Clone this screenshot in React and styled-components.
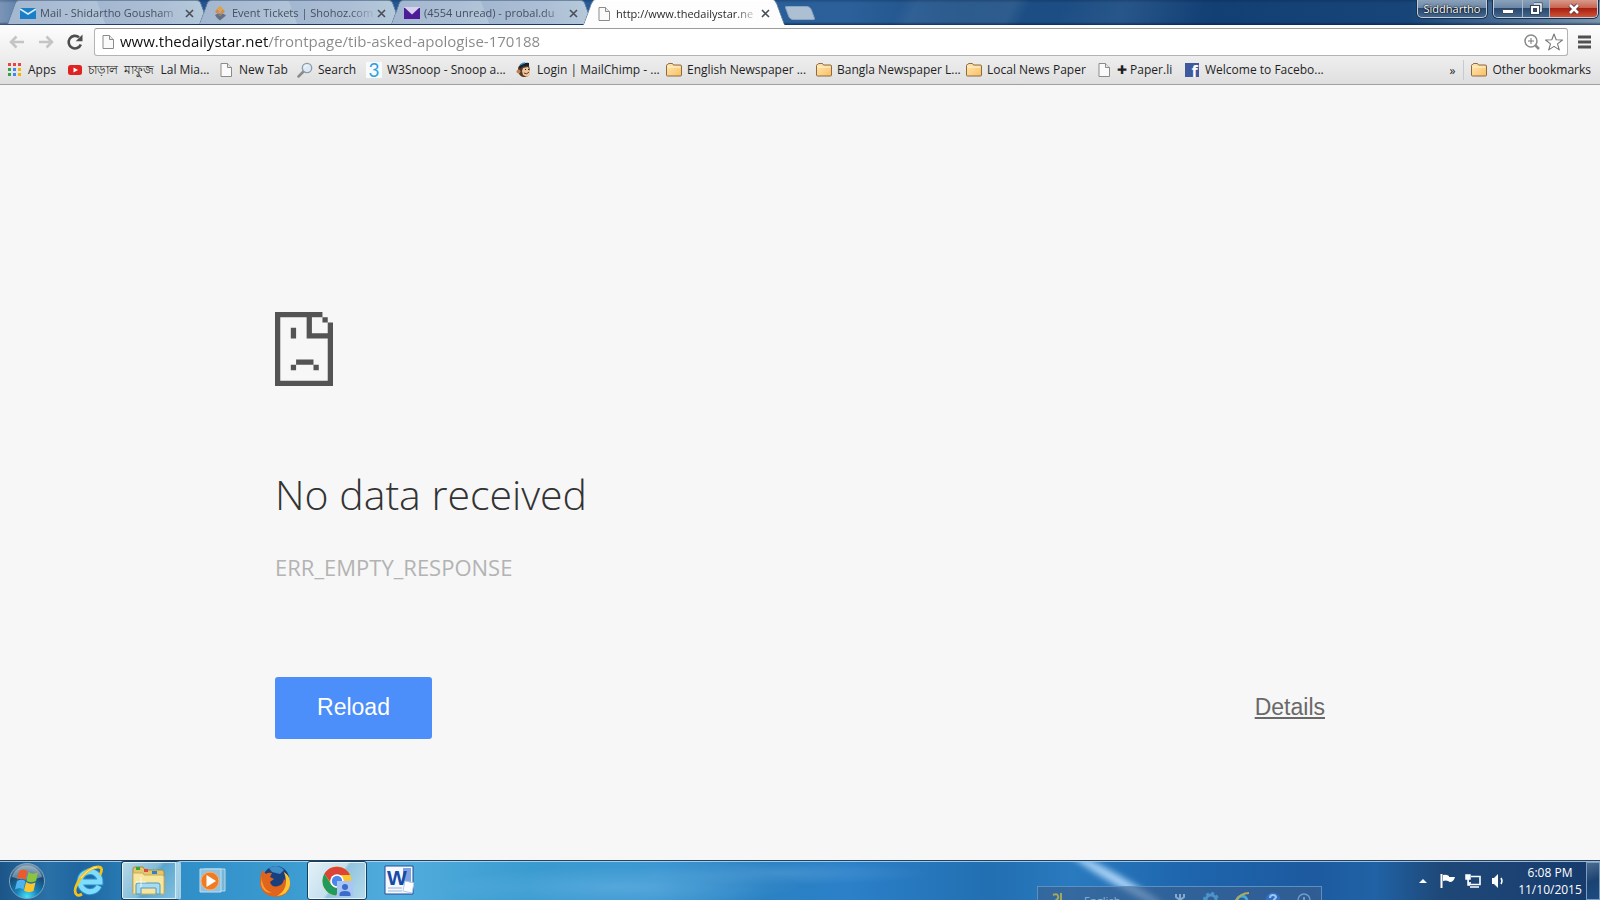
import React from "react";
import styled, { createGlobalStyle, css } from "styled-components";

const ui = `"Open Sans", "Noto Sans", sans-serif`;

const Global = createGlobalStyle`
  * { box-sizing: border-box; }
  body { margin: 0; background: #f7f7f7; font-family: ${ui}; }
  button { padding: 0; border: 0; background: none; font: inherit; color: inherit; }
  a { color: inherit; text-decoration: none; }
  svg { display: block; flex: none; }
`;

const Screen = styled.div`
  display: flex;
  flex-direction: column;
  min-height: 100vh;
`;

/* ---------- title bar ---------- */
const TitleBar = styled.header`
  display: flex;
  height: 25px;
  padding-left: 7px;
  padding-right: 2px;
  background:
    linear-gradient(to bottom, rgba(0, 20, 50, 0.25) 0, transparent 3px, transparent 22px, rgba(0, 25, 60, 0.6) 25px),
    linear-gradient(115deg, transparent 56%, rgba(255, 255, 255, 0.06) 57%, rgba(255, 255, 255, 0.08) 63%, transparent 64%, transparent 66%, rgba(255, 255, 255, 0.06) 70%, transparent 75%),
    linear-gradient(to right, #7c95b7 0, #4d74a5 2%, #24548f 12%, #2b609a 53%, #1d4f85 60%, #1b4c83 70%, #123f74 76%, #174579 88%, #466a92 94%, #7b93ac 100%);
`;

const TabList = styled.nav`
  display: flex;
  align-items: flex-end;
`;

const tabSide = css`
  content: "";
  position: absolute;
  z-index: -1;
  top: 0;
  bottom: 0;
  width: 51%;
  border-top: 1px solid ${(p) => (p.$active ? "#ffffff" : "#6f87a4")};
  background: ${(p) =>
    p.$active ? "#fdfdfd" : "linear-gradient(to right, #a3b7d0, #adbfd5 60%, #b4c9da)"};
`;

const Tab = styled.div`
  position: relative;
  z-index: ${(p) => (p.$active ? 2 : 1)};
  display: flex;
  align-items: center;
  width: 201px;
  height: ${(p) => (p.$active ? 25 : 24)}px;
  margin-bottom: ${(p) => (p.$active ? 0 : 1)}px;
  margin-right: -9px;
  padding: 2px 14px 0 13px;
  color: ${(p) => (p.$active ? "#2b2b2b" : "#44505f")};

  &::before {
    ${tabSide}
    left: 0;
    border-left: 1px solid #66809f;
    border-radius: 4px 0 0 0;
    transform: skewX(-20deg);
    transform-origin: bottom left;
  }
  &::after {
    ${tabSide}
    right: 0;
    border-right: 1px solid #66809f;
    border-radius: 0 4px 0 0;
    transform: skewX(20deg);
    transform-origin: bottom right;
  }
`;

const TabTitle = styled.button`
  flex: 1;
  overflow: hidden;
  margin: 0 4px;
  font-size: 11px;
  line-height: 18px;
  text-align: left;
  white-space: nowrap;
  mask-image: linear-gradient(to right, #000 84%, rgba(0, 0, 0, 0.2) 98%);
`;

const CloseTab = styled.button`
  width: 9px;
  height: 9px;
`;

const NewTab = styled.button`
  align-self: flex-start;
  width: 26px;
  height: 14px;
  margin: 6px 0 0 12px;
  border: 1px solid #8ba4bf;
  border-radius: 2px 4px 2px 4px;
  background: #adbfd2;
  transform: skewX(20deg);
`;

const WindowControls = styled.div`
  display: flex;
  gap: 6px;
  margin-left: auto;
`;

const glass = css`
  height: 18px;
  border: 1px solid #c0cedd;
  border-top: 0;
  border-radius: 0 0 5px 5px;
  box-shadow: 0 0 0 1px #16304f;
  overflow: hidden;
`;

const glassFill = "linear-gradient(to bottom, #8ba1ba 0, #6a86a6 48%, #28486f 50%, #45668b 100%)";

const Profile = styled.button`
  ${glass}
  width: 70px;
  background: ${glassFill};
  color: #fff;
  font-size: 11px;
  line-height: 17px;
  text-shadow: 0 0 2px #000, 0 0 1px #000;
`;

const ControlGroup = styled.div`
  ${glass}
  display: flex;
`;

const Control = styled.button`
  display: flex;
  align-items: center;
  justify-content: center;
  width: ${(p) => p.$width}px;
  border-right: ${(p) => (p.$danger ? 0 : "1px solid #a9bacd")};
  background: ${(p) =>
    p.$danger ? "linear-gradient(to bottom, #d89a8c 0, #c9604e 48%, #a82010 50%, #cf5236 100%)" : glassFill};
`;

/* ---------- toolbar ---------- */
const Chrome = styled.div`
  height: 60px;
  border-bottom: 1px solid #a0a0a0;
  background: linear-gradient(to bottom, #fdfdfd 0, #efefef 50%, #dfdfdf 100%);
`;

const Toolbar = styled.form`
  display: flex;
  align-items: center;
  height: 32px;
  padding: 3px 3px 1px 7px;
  gap: 9px;
`;

const ToolButton = styled.button`
  display: flex;
  justify-content: center;
  width: 20px;
  height: 18px;
`;

const Omnibox = styled.div`
  display: flex;
  flex: 1;
  align-items: center;
  gap: 2px;
  height: 28px;
  padding: 0 3px 0 5px;
  border: 1px solid #b3b3b3;
  border-top-color: #9c9c9c;
  border-radius: 3px;
  background: #fff;
`;

const Address = styled.input`
  flex: 1;
  min-width: 0;
  height: 26px;
  padding: 0 0 2px 2px;
  border: 0;
  outline: 0;
  background: linear-gradient(to right, #111 150px, #888 150px);
  background-clip: text;
  -webkit-text-fill-color: transparent;
  font-family: ${ui};
  font-size: 15px;
`;

const Bookmarks = styled.nav`
  display: flex;
  align-items: center;
  height: 27px;
  padding: 0 9px 1px 7px;
  font-size: 12px;
  color: #1f1f1f;
`;

const Bookmark = styled.a`
  display: flex;
  align-items: center;
  gap: 5px;
  width: ${(p) => (p.$width ? p.$width + "px" : "auto")};
  line-height: 20px;
  white-space: pre;
`;

const Overflow = styled.button`
  margin-left: auto;
  padding-right: 8px;
`;

const Divider = styled.span`
  width: 1px;
  height: 20px;
  margin-right: 7px;
  background: #c3ccd6;
`;

/* ---------- error page ---------- */
const Page = styled.main`
  flex: 1;
  width: 100%;
  max-width: 1050px;
  margin: 0 auto;
  padding-top: 227px;
`;

const Heading = styled.h1`
  margin: 78px 0 0;
  color: #333;
  font-size: 41px;
  font-weight: 300;
  line-height: 60px;
`;

const ErrorCode = styled.p`
  margin: 28px 0 0;
  color: #b3b3b3;
  font-size: 22px;
  line-height: 30px;
`;

const Actions = styled.div`
  display: flex;
  align-items: center;
  justify-content: space-between;
  margin-top: 95px;
  padding-bottom: 40px;
  font-family: "Liberation Sans", Arial, sans-serif;
  font-size: 23px;
`;

const Reload = styled.button`
  width: 157px;
  height: 62px;
  padding-bottom: 2px;
  border-radius: 3px;
  background: #4c8efa;
  color: #fff;
`;

const Details = styled.a`
  padding-bottom: 2px;
  color: #696969;
  text-decoration: underline;
  text-decoration-thickness: 2px;
  text-underline-offset: 2px;
`;

/* ---------- taskbar ---------- */
const Taskbar = styled.footer`
  position: relative;
  display: flex;
  height: 40px;
  overflow: hidden;
  border-top: 1px solid #24425f;
  box-shadow: inset 0 1px 0 rgba(200, 225, 245, 0.75);
  background:
    radial-gradient(ellipse 180px 20px at 620px 26px, rgba(140, 200, 240, 0.3), transparent),
    radial-gradient(ellipse 150px 12px at 780px 12px, rgba(120, 180, 230, 0.3), transparent),
    linear-gradient(to right, #1c5588 0, #2a71a8 3%, #1f659f 5%, #2e8cc6 10%, #3b9bd0 18%, #52addc 25%, #3a9bd0 33%, #3d98d2 41%, #2a81c2 48%, #2b80c8 53%, #226fb2 62%, #2a7abf 67%, #1e66ae 74%, #1d5a9f 82%, #2062a5 86%, #1e4878 90%, #1b4273 95%, #15396b 100%);
`;

const Flare = styled.span`
  position: absolute;
  top: 14px;
  left: 1062px;
  width: 110px;
  height: 10px;
  border-radius: 50%;
  background: #a9d3f7;
  filter: blur(3px);
  transform: rotate(30deg);
`;

const StartButton = styled.button`
  margin: 1px 13px 0 8px;
  width: 38px;
  height: 38px;
`;

const Tasks = styled.div`
  display: flex;
  gap: 2px;
`;

const Task = styled.button`
  display: flex;
  align-items: center;
  justify-content: center;
  width: 60px;
  height: 39px;
  border: 1px solid transparent;
  border-radius: 3px;
  ${(p) =>
    p.$open &&
    css`
      border-color: #173e5c;
      box-shadow: inset 0 0 0 1px rgba(255, 255, 255, 0.7);
      background: ${p.$open === "active"
        ? "linear-gradient(125deg, #e4f1f8 0, #c5e0ee 48%, #92c4de 52%, #b7dbed 100%)"
        : "linear-gradient(125deg, #b9d9e8 0, #82bcd9 48%, #59a5ce 55%, #80c1e0 100%)"};
    `}
  ${(p) => p.$stacked && "border-right: 5px double #a4cfe4; padding-right: 3px;"}
`;

const LanguageBar = styled.div`
  position: absolute;
  top: 25px;
  left: 1037px;
  display: flex;
  align-items: center;
  gap: 15px;
  width: 285px;
  height: 26px;
  padding: 2px 9px 0 12px;
  border: 1px solid #5d8fc0;
  background: rgba(60, 95, 140, 0.6);
  color: #8fb4da;
  font-size: 11px;
`;

const Language = styled.span`
  flex: 1;
  padding-left: 5px;
`;

const Tray = styled.div`
  display: flex;
  align-items: center;
  margin-left: auto;
  gap: 9px;
`;

const TrayButton = styled.button`
  display: flex;
  align-items: center;
  justify-content: center;
  width: 16px;
  height: 20px;
`;

const Clock = styled.time`
  width: 70px;
  margin-right: -8px;
  color: #fff;
  font-size: 12px;
  line-height: 17px;
  text-align: center;
`;

const ShowDesktop = styled.button`
  width: 14px;
  height: 38px;
  border: 1px solid #7c9dbe;
  background: linear-gradient(160deg, #4c6c90 0, #1b4270 50%, #1c4c84 100%);
`;

/* ---------- icons ---------- */
const PageIcon = () => (
  <svg width="16" height="16" viewBox="0 0 16 16">
    <path d="M3 1.500h6.500L13.500 5.500V14.500H3z" fill="#fafafa" stroke="#8b8b8b" />
    <path d="M9.500 1.500v4h4" fill="#e8e8e8" stroke="#8b8b8b" />
  </svg>
);

const FolderIcon = () => (
  <svg width="16" height="16" viewBox="0 0 16 16">
    <defs>
      <linearGradient id="fold" x2="1" y2="1">
        <stop stopColor="#ffe9b5" />
        <stop offset="1" stopColor="#f9bf63" />
      </linearGradient>
    </defs>
    <path d="M.5 13V3.500q0-1 1-1H2l.5-1h4l1 1.500h6.500q1.500 0 1.500 1V13q0 1-1 1h-13q-1 0-1-1z" fill="url(#fold)" stroke="#8d6a42" />
    <path d="M1.500 5h13" stroke="#fff3cf" />
  </svg>
);

const MailIcon = ({ color, flap }) => (
  <svg width="16" height="16" viewBox="0 0 16 16">
    <path d="M0 3h16v11H0z" fill={color} />
    <path d={flap ? "M0 2h16L8 9.500z" : "M0 4l8 5 8-5"} fill={flap ? "#d9d0ee" : "none"} stroke={flap ? "none" : "#d7ecf9"} strokeWidth="1.500" />
  </svg>
);

const ShohozIcon = () => (
  <svg width="16" height="16" viewBox="0 0 16 16">
    <path d="M8 1l3 2.500L8 6 5 3.500z" fill="#e8a03c" />
    <path d="M5 4l3 2.500L5.500 9 3 6.500zM11 4l2 2.500L9.500 9.500 8 7z" fill="#d58d45" />
    <path d="M3 10l3-1.500L8 11l3-2.500 3 2L11 13l-3 2.500L5 13z" fill="#646f82" />
    <path d="M6 8l4 1-2 2z" fill="#8a7463" />
  </svg>
);

const AppsIcon = () => {
  const colors = ["#e8453c", "#e8453c", "#e8453c", "#31a350", "#4285f4", "#f5b400", "#31a350", "#4285f4", "#f5b400"];
  return (
    <svg width="16" height="16" viewBox="0 0 16 16">
      {colors.map((c, i) => (
        <rect key={i} x={1 + (i % 3) * 5} y={1 + Math.floor(i / 3) * 5} width="3" height="3" fill={c} />
      ))}
    </svg>
  );
};

const YouTubeIcon = () => (
  <svg width="16" height="16" viewBox="0 0 16 16">
    <rect x="1" y="3" width="14" height="10" rx="2.500" fill="#e02320" />
    <path d="M6.500 5.500v5L11 8z" fill="#fff" />
  </svg>
);

const SearchIcon = () => (
  <svg width="16" height="16" viewBox="0 0 16 16">
    <path d="M1.500 14.500l5-5" stroke="#8b8b8b" strokeWidth="2.500" strokeLinecap="round" />
    <circle cx="10" cy="6" r="4.700" fill="#dbeaf6" stroke="#8d99a6" strokeWidth="1.300" />
    <path d="M7.500 5.500q.7-2 3-2" fill="none" stroke="#fff" />
  </svg>
);

const SnoopIcon = () => (
  <svg width="16" height="16" viewBox="0 0 16 16">
    <path d="M0 0h16v16H0z" fill="#f8fbfd" />
    <text x="8" y="15" fontSize="19" textAnchor="middle" fill="#2f9fe0" fontFamily="Lato, sans-serif">3</text>
  </svg>
);

const ChimpIcon = () => (
  <svg width="16" height="16" viewBox="0 0 16 16">
    <path d="M2 9Q1 3 7 2l5-1 1 3 1 4v4l-3 3H7q-4-1-5-6z" fill="#5b3823" />
    <circle cx="2.500" cy="9.500" r="2" fill="#b98258" />
    <path d="M7 6l5-1 2 4v4l-3 2-4-2-1-4z" fill="#edc7a0" />
    <path d="M3 5Q7 0 13 1v3Q7 3 4 7z" fill="#16232f" />
    <path d="M4 3q3-2 5-2" stroke="#2e8fd5" strokeWidth="1.500" fill="none" />
    <path d="M8 11q3 2 5-1" stroke="#603820" fill="none" />
    <path d="M9 7h1v1H9zM12 7h1v1h-1z" fill="#222" />
  </svg>
);

const FacebookIcon = () => (
  <svg width="16" height="16" viewBox="0 0 16 16">
    <path d="M1 1h14v14H1z" fill="#3f5a9c" />
    <text x="10.500" y="15" fontSize="16" fontWeight="bold" textAnchor="middle" fill="#fff" fontFamily="Open Sans, sans-serif">f</text>
  </svg>
);

const CrossIcon = () => (
  <svg width="9" height="9" viewBox="0 0 9 9">
    <path d="M1 1l7 7M8 1L1 8" stroke="#4a4f57" strokeWidth="1.600" />
  </svg>
);

const ArrowIcon = ({ forward }) => (
  <svg width="18" height="18" viewBox="0 0 18 18">
    <path d={forward ? "M2 9h12M9.500 3.500L15 9l-5.500 5.500" : "M16 9H4M8.500 3.500L3 9l5.500 5.500"} fill="none" stroke="#c4c4c4" strokeWidth="2.500" />
  </svg>
);

const ReloadIcon = () => (
  <svg width="18" height="18" viewBox="0 0 18 18">
    <path d="M14.800 11.500A6.300 6.300 0 1 1 13 4.300" fill="none" stroke="#4d4d4d" strokeWidth="2.600" />
    <path d="M16.500 1.500v6.800H9.700z" fill="#4d4d4d" />
  </svg>
);

const SadPage = () => (
  <svg width="58" height="74" viewBox="0 0 11 14" preserveAspectRatio="none" role="img" aria-label="Page could not be shown">
    <path
      fill="#545454"
      fillRule="evenodd"
      d="M0 0H9V1H7V4H10V2H11V14H0zM1 1V13H10V5H6V1zM9 1H10V2H9zM3 3H4V5H3zM4 9H7.300V10H4zM3 10H4V11H3zM7.300 10H8.300V11H7.300z"
    />
  </svg>
);

const StartIcon = () => (
  <svg width="38" height="38" viewBox="0 0 38 38">
    <defs>
      <radialGradient id="orb" cx=".5" cy=".95" r=".9">
        <stop stopColor="#46e2fb" />
        <stop offset=".35" stopColor="#1682b8" />
        <stop offset=".75" stopColor="#174872" />
        <stop offset="1" stopColor="#7892a8" />
      </radialGradient>
    </defs>
    <circle cx="19" cy="19" r="17.500" fill="url(#orb)" stroke="#7da5c0" />
    <path d="M4 15a15.500 15.500 0 0 1 30 0q-15 5-30 0z" fill="#dce8f0" opacity=".4" />
    <path d="M11 9q5-3 8.500 0l-2 9q-4-3-8.500-.5z" fill="#ea5a2b" />
    <path d="M20.500 10q4 3 9.500.5l-2 8.500q-5 2.500-9.500 0z" fill="#8bc53f" />
    <path d="M9 19q4.500-2.500 8.500 0l-2 8.500q-4-2.500-8.500 0z" fill="#4fb2ee" />
    <path d="M18 20q4.500 3 9.500.5l-2 8.500q-5 2.500-9.500-.5z" fill="#fdc52c" />
  </svg>
);

const ExplorerEIcon = () => (
  <svg width="32" height="32" viewBox="0 0 32 32">
    <path d="M26 21a10 10 0 1 1 1-4H9" fill="none" stroke="#2b8fd0" strokeWidth="7" />
    <path d="M26 21a10 10 0 1 1 1-4H9" fill="none" stroke="#7fdcfa" strokeWidth="5" />
    <path d="M27 10Q31 2 25 2 16 2 7 14-1 26 4 30q2 1 5-1" fill="none" stroke="#f3c21b" strokeWidth="2.800" />
    <path d="M8 13Q16 3 24 2" fill="none" stroke="#fff0a0" />
  </svg>
);

const FoldersIcon = () => (
  <svg width="34" height="30" viewBox="0 0 34 30">
    <path d="M2 3q0-2 2-2h8l2 3h17q2 0 2 2v20H2z" fill="#e4c66e" stroke="#a78b3d" />
    <path d="M5 1h4v3H5z" fill="#35a637" />
    <path d="M13 3h4v3h-4z" fill="#de4934" />
    <path d="M21 5h5v3h-5z" fill="#2685cf" />
    <path d="M2 7h10l1 2h18q2 0 2 2v17H2z" fill="#f6e6a0" stroke="#c6ad5b" />
    <path d="M5 28V19q0-2 2-2h20q2 0 2 2v9h-4v-6H10v6z" fill="#a7dbf2" stroke="#5499bd" />
    <path d="M10 11v10M5 16h10" stroke="#fff" opacity=".8" />
  </svg>
);

const MediaIcon = () => (
  <svg width="28" height="26" viewBox="0 0 28 26">
    <path d="M5 1h21v22H5z" fill="#78b6d8" stroke="#b4dbed" />
    <path d="M1 1h21v23H1z" fill="#8fc3df" stroke="#bfdff0" />
    <circle cx="11" cy="13" r="9" fill="#ef7c22" stroke="#f7b27b" />
    <path d="M7.500 7v12L17 13z" fill="#fff" />
  </svg>
);

const FirefoxIcon = () => (
  <svg width="32" height="32" viewBox="0 0 32 32">
    <circle cx="17" cy="14" r="13" fill="#193f7c" />
    <path d="M10 3Q18-2 25 5l-4 4-8-2z" fill="#3f8ec7" />
    <path d="M3 5l4 4q2-2 6-1l-2 4 4 2-4 3q2 6 8 4 5-1 6-7 2 1 1 3 2-5-1-10 7 5 6 13-1 11-14 12Q3 31 1 19 1 11 3 5z" fill="#e1641c" />
    <path d="M25 7q7 5 6 13-2 10-13 11 9-5 9-14 0-5-2-10z" fill="#fbc631" />
    <path d="M3 11q-1 13 10 17-9 0-11-9z" fill="#f5a236" />
  </svg>
);

const ChromeIcon = () => (
  <svg width="32" height="32" viewBox="0 0 32 32">
    <circle cx="16" cy="16" r="14.500" fill="#fbc52d" />
    <path d="M3.400 8.800A14.500 14.500 0 0 1 29 10H16a6 6 0 0 0-6 8z" fill="#dc4437" />
    <path d="M3.400 8.800A14.500 14.500 0 0 0 15 30.500l6-10q-7 5-11-1.500z" fill="#229a5b" />
    <circle cx="16" cy="16" r="6.800" fill="#fff" />
    <circle cx="16" cy="16" r="5.200" fill="#4a88ed" />
    <path d="M16 16h16v16H16z" fill="#a9c5f5" />
    <circle cx="24" cy="22" r="3" fill="#3c6cc9" />
    <path d="M18.500 31v-2q0-3 5.500-3t5.500 3v2z" fill="#3c6cc9" />
  </svg>
);

const WordIcon = () => (
  <svg width="30" height="32" viewBox="0 0 30 32">
    <path d="M1 1h28v28H1z" fill="#f5f9ff" stroke="#234c97" />
    <path d="M19 3h8v15h-8z" fill="#7fa2df" />
    <path d="M4 23h14M4 26h14" stroke="#9bb2da" />
    <text x="13" y="20" fontSize="21" fontWeight="bold" textAnchor="middle" fill="#164ba6" fontFamily="Liberation Sans, sans-serif">W</text>
    <path d="M21 16l9 2-2 10-9-2z" fill="#fff" stroke="#b9c9e6" />
  </svg>
);

/* ---------- data ---------- */
const tabs = [
  { title: "Mail - Shidartho Gousham", icon: <MailIcon color="#1b7fc8" /> },
  { title: "Event Tickets | Shohoz.com", icon: <ShohozIcon /> },
  { title: "(4554 unread) - probal.du", icon: <MailIcon color="#4c1d97" flap /> },
  { title: "http://www.thedailystar.ne", icon: <PageIcon />, active: true },
];

const bookmarks = [
  { label: "Apps", icon: <AppsIcon />, width: 60 },
  { label: "চাড়াল  মাফুজ  Lal Mia...", icon: <YouTubeIcon />, width: 151 },
  { label: "New Tab", icon: <PageIcon />, width: 79 },
  { label: "Search", icon: <SearchIcon />, width: 69 },
  { label: "W3Snoop - Snoop a...", icon: <SnoopIcon />, width: 150 },
  { label: "Login | MailChimp - ...", icon: <ChimpIcon />, width: 150 },
  { label: "English Newspaper ...", icon: <FolderIcon />, width: 150 },
  { label: "Bangla Newspaper L...", icon: <FolderIcon />, width: 150 },
  { label: "Local News Paper", icon: <FolderIcon />, width: 130 },
  { label: "✚ Paper.li", icon: <PageIcon />, width: 88 },
  { label: "Welcome to Facebo...", icon: <FacebookIcon />, width: 150 },
];

const tasks = [
  { name: "Internet Explorer", icon: <ExplorerEIcon /> },
  { name: "Windows Explorer", icon: <FoldersIcon />, open: "open", stacked: true },
  { name: "Media Player", icon: <MediaIcon /> },
  { name: "Firefox", icon: <FirefoxIcon /> },
  { name: "Chrome", icon: <ChromeIcon />, open: "active" },
  { name: "Word", icon: <WordIcon /> },
];

export default function App() {
  return (
    <Screen>
      <Global />
      <TitleBar>
        <TabList aria-label="Tabs">
          {tabs.map((t) => (
            <Tab key={t.title} $active={t.active}>
              {t.icon}
              <TabTitle>{t.title}</TabTitle>
              <CloseTab aria-label="Close tab"><CrossIcon /></CloseTab>
            </Tab>
          ))}
          <NewTab aria-label="New tab" />
        </TabList>
        <WindowControls>
          <Profile>Siddhartho</Profile>
          <ControlGroup>
            <Control $width={29} aria-label="Minimize">
              <svg width="14" height="12" viewBox="0 0 14 12"><path d="M1.500 6.500h11v4h-11z" fill="#fff" stroke="#3f4b5b" /></svg>
            </Control>
            <Control $width={27} aria-label="Restore">
              <svg width="14" height="14" viewBox="0 0 14 14">
                <path d="M5 2h7v7h-2" fill="none" stroke="#354458" strokeWidth="3" />
                <path d="M5 2h7v7h-2" fill="none" stroke="#fff" strokeWidth="1.500" />
                <path d="M3 5h6v6H3z" fill="none" stroke="#354458" strokeWidth="4" />
                <path d="M3 5h6v6H3z" fill="none" stroke="#fff" strokeWidth="2" />
              </svg>
            </Control>
            <Control $width={47} $danger aria-label="Close">
              <svg width="14" height="12" viewBox="0 0 14 12">
                <path d="M3 2l8 8M11 2l-8 8" stroke="#5a3238" strokeWidth="4.500" />
                <path d="M3 2l8 8M11 2l-8 8" stroke="#fff" strokeWidth="2.600" />
              </svg>
            </Control>
          </ControlGroup>
        </WindowControls>
      </TitleBar>

      <Chrome>
        <Toolbar onSubmit={(e) => e.preventDefault()}>
          <ToolButton type="button" aria-label="Back"><ArrowIcon /></ToolButton>
          <ToolButton type="button" aria-label="Forward"><ArrowIcon forward /></ToolButton>
          <ToolButton type="button" aria-label="Reload page"><ReloadIcon /></ToolButton>
          <Omnibox>
            <PageIcon />
            <Address aria-label="Address" defaultValue="www.thedailystar.net/frontpage/tib-asked-apologise-170188" />
            <ToolButton type="button" aria-label="Zoom">
              <svg width="18" height="18" viewBox="0 0 18 18">
                <circle cx="8" cy="8" r="6" fill="none" stroke="#8a8a8a" strokeWidth="1.500" />
                <path d="M12.500 12.500l3.500 3.500" stroke="#8a8a8a" strokeWidth="2.500" />
                <path d="M5 8h6M8 5v6" stroke="#777" />
              </svg>
            </ToolButton>
            <ToolButton type="button" aria-label="Bookmark this page">
              <svg width="18" height="18" viewBox="0 0 18 18">
                <path d="M9 1l2.200 5.800 6.300.2-5 3.900 1.800 6L9 13.400l-5.300 3.500 1.800-6-5-3.900 6.300-.2z" fill="#fff" stroke="#777" strokeWidth="1.100" strokeLinejoin="round" />
              </svg>
            </ToolButton>
          </Omnibox>
          <ToolButton type="button" aria-label="Menu">
            <svg width="18" height="18" viewBox="0 0 18 18"><path d="M0 4h13M0 9h13M0 14h13" stroke="#505050" strokeWidth="3" /></svg>
          </ToolButton>
        </Toolbar>
        <Bookmarks aria-label="Bookmarks">
          {bookmarks.map((b) => (
            <Bookmark key={b.label} href="#" $width={b.width}>{b.icon}{b.label}</Bookmark>
          ))}
          <Overflow>»</Overflow>
          <Divider />
          <Bookmark href="#"><FolderIcon />Other bookmarks</Bookmark>
        </Bookmarks>
      </Chrome>

      <Page>
        <SadPage />
        <Heading>No data received</Heading>
        <ErrorCode>ERR_EMPTY_RESPONSE</ErrorCode>
        <Actions>
          <Reload>Reload</Reload>
          <Details href="#">Details</Details>
        </Actions>
      </Page>

      <Taskbar>
        <Flare />
        <StartButton aria-label="Start"><StartIcon /></StartButton>
        <Tasks>
          {tasks.map((t) => (
            <Task key={t.name} aria-label={t.name} $open={t.open} $stacked={t.stacked}>{t.icon}</Task>
          ))}
        </Tasks>
        <LanguageBar>
          <svg width="14" height="16" viewBox="0 0 14 16"><path d="M3 3q4-2 5 1t-3 5M11 1v12" fill="none" stroke="#a3a75a" strokeWidth="2" /></svg>
          <Language>English</Language>
          <svg width="16" height="16" viewBox="0 0 16 16"><path d="M4 2v3l4 3 4-3V2M8 2v12" fill="none" stroke="#86a9d0" strokeWidth="2" /></svg>
          <svg width="16" height="16" viewBox="0 0 16 16"><circle cx="8" cy="8" r="5" fill="none" stroke="#4d92cb" strokeWidth="3" /><circle cx="8" cy="8" r="7" fill="none" stroke="#4d92cb" strokeWidth="2" strokeDasharray="3 2.500" /></svg>
          <svg width="16" height="16" viewBox="0 0 16 16"><circle cx="8" cy="9" r="5" fill="none" stroke="#48a8de" strokeWidth="3" /><path d="M1 10Q6 1 15 1" fill="none" stroke="#b0a95a" strokeWidth="2" /></svg>
          <svg width="16" height="16" viewBox="0 0 16 16"><circle cx="8" cy="8" r="7.500" fill="#316fc6" /><path d="M5 6q0-3 3-3t3 2.500L8 9v2" fill="none" stroke="#9fc5ef" strokeWidth="2" /></svg>
          <svg width="16" height="16" viewBox="0 0 16 16"><circle cx="8" cy="8" r="6" fill="none" stroke="#6e9bcc" strokeWidth="1.500" /><path d="M8 5v6" stroke="#6e9bcc" strokeWidth="2" /></svg>
        </LanguageBar>
        <Tray>
          <TrayButton aria-label="Show hidden icons">
            <svg width="10" height="6" viewBox="0 0 10 6"><path d="M1 5l4-4 4 4z" fill="#fff" /></svg>
          </TrayButton>
          <TrayButton aria-label="Action Center">
            <svg width="16" height="16" viewBox="0 0 16 16"><path d="M1.500 1v14" stroke="#fff" strokeWidth="2" /><path d="M3 2q3-1 6 1v1h6q-1 4-4 5-2 0-3-1-2-1-5 0z" fill="#fff" /></svg>
          </TrayButton>
          <TrayButton aria-label="Network">
            <svg width="16" height="16" viewBox="0 0 16 16"><path d="M6 3.500h9v8H5V9M5 14h9" fill="none" stroke="#fff" strokeWidth="1.600" /><path d="M1 2h4v4H1zM3 6v6h2" fill="#fff" stroke="#fff" strokeWidth="1.500" /></svg>
          </TrayButton>
          <TrayButton aria-label="Volume">
            <svg width="14" height="16" viewBox="0 0 14 16"><path d="M1 5h2l4-4v14l-4-4H1z" fill="#fff" /><path d="M10 5q2 3 0 6" fill="none" stroke="#fff" strokeWidth="1.500" /></svg>
          </TrayButton>
          <Clock>6:08 PM<br />11/10/2015</Clock>
          <ShowDesktop aria-label="Show desktop" />
        </Tray>
      </Taskbar>
    </Screen>
  );
}
